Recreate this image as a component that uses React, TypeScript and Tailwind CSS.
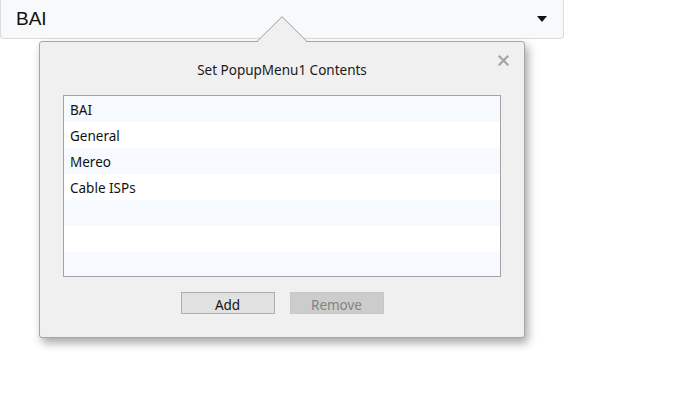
const ITEMS = ["BAI", "General", "Mereo", "Cable ISPs", "", "", ""];

const ui = { fontFamily: '"Noto Sans", "Open Sans", sans-serif' };

export default function App() {
  return (
    <div className="h-[407px] w-[690px] bg-white" style={{ fontFamily: '"Liberation Sans", Arial, sans-serif' }}>
      {/* the popup menu control */}
      <div className="flex h-[39px] w-[564px] items-center justify-between rounded-b-[4px] border border-t-0 border-[#dcdcdc] bg-[#f8f9fa] pl-[15px] pr-[16px]">
        <span className="text-[19px] text-[#111]">BAI</span>
        <svg width="10" height="6" viewBox="0 0 10 6">
          <path d="M0 0 L10 0 L5 6 Z" fill="#111" />
        </svg>
      </div>

      <Popover />
    </div>
  );
}

function Popover() {
  return (
    <div className="relative ml-[39px] mt-[2px] w-[486px]" style={ui}>
      {/* pointer */}
      <svg className="absolute left-[218px] top-[-25px] z-10" width="50" height="27" viewBox="0 0 50 27">
        <path d="M0 25.5 L25 0.7 L50 25.5" fill="#f0f0f0" stroke="#9a9a9a" strokeWidth="1" />
        <rect x="1" y="25" width="48" height="2" fill="#f0f0f0" />
      </svg>

      <div className="relative flex h-[297px] flex-col rounded-[3px] border border-[#a6a6a6] bg-[#f0f0f0] shadow-[3px_5px_10px_rgba(0,0,0,0.35)]">
        <button className="absolute right-[15px] top-[13px]">
          <svg width="11" height="11" viewBox="0 0 11 11">
            <path d="M1.5 1.5 L9.5 9.5 M9.5 1.5 L1.5 9.5" stroke="#a3a3a3" strokeWidth="2.2" strokeLinecap="square" />
          </svg>
        </button>

        <div className="h-[36px] pt-[19px] text-center text-[13.5px] leading-[19px] text-[#1a1a1a]">Set PopupMenu1 Contents</div>

        <div className="mx-[23px] mt-[17px] h-[182px] overflow-hidden border border-[#a3a3a3] bg-white">
          {ITEMS.map((it, i) => (
            <div
              key={i}
              className={`h-[26px] pl-[6px] pt-[5px] text-[13.5px] leading-[19px] text-[#111] ${i % 2 === 0 ? "bg-[#f6f9fd]" : "bg-white"}`}
            >
              {it}
            </div>
          ))}
        </div>

        <div className="mt-[15px] flex justify-center gap-[15px]">
          <button className="h-[22px] w-[94px] border border-[#adadad] bg-[#e1e1e1] pt-[5px] text-[13.5px] leading-none text-[#111]">Add</button>
          <button className="h-[22px] w-[94px] border border-[#c6c6c6] bg-[#cccccc] pt-[5px] text-[13.5px] leading-none text-[#838383]">Remove</button>
        </div>
      </div>
    </div>
  );
}
